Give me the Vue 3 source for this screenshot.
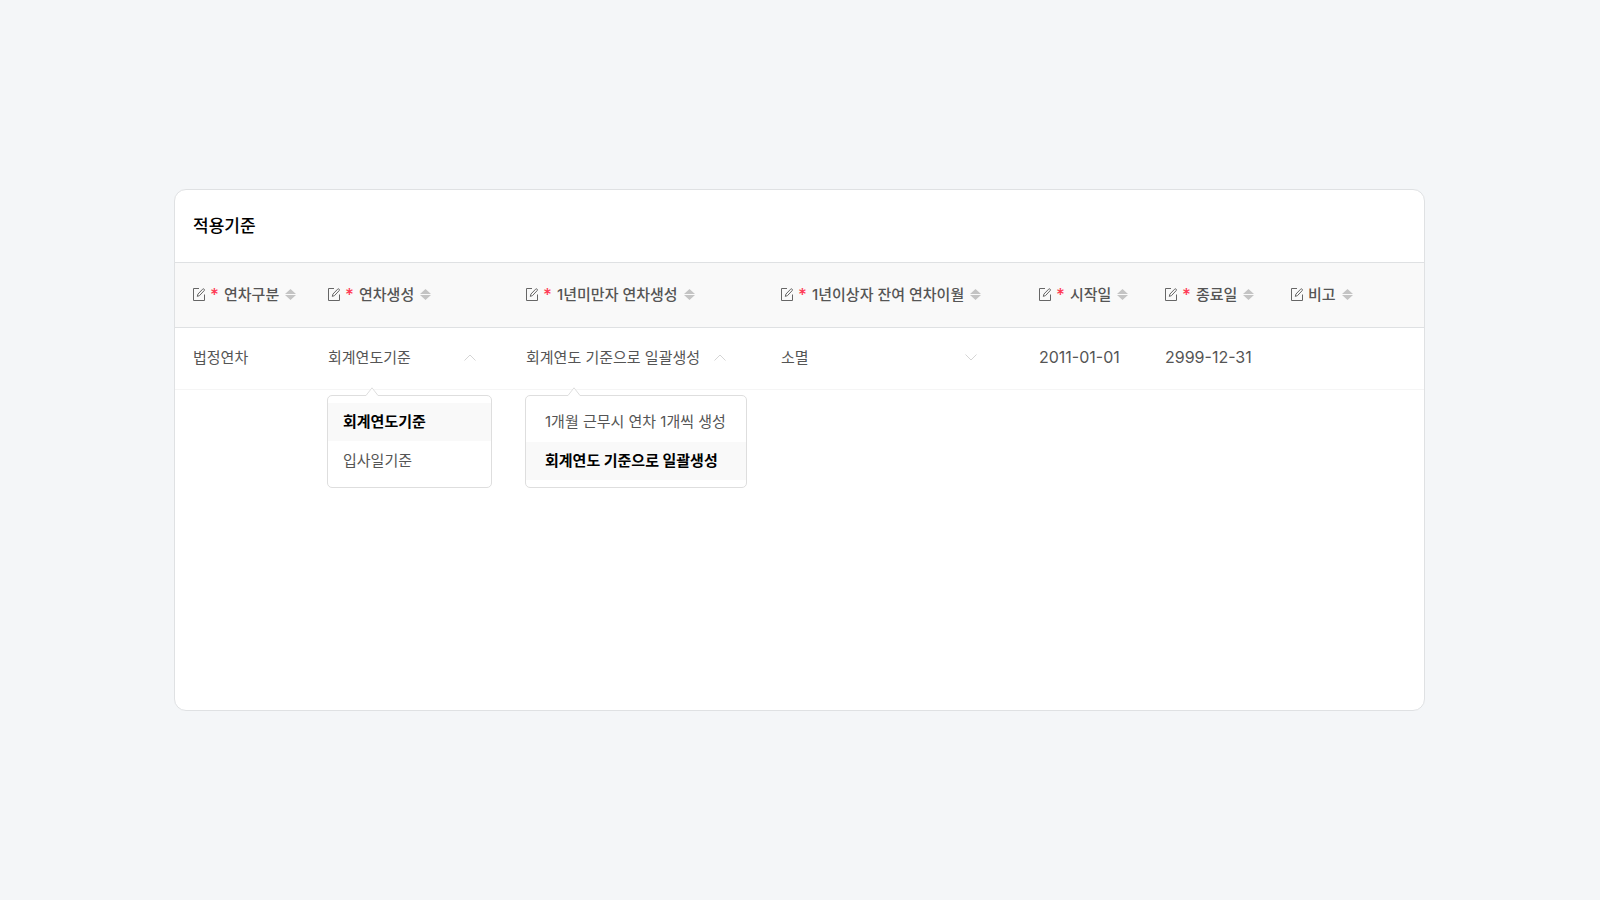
<template>
  <main class="page">
    <section class="card" aria-labelledby="card-title">
      <h2 id="card-title" class="card-title">적용기준</h2>

      <table class="grid">
        <colgroup>
          <col v-for="col in columns" :key="col.key" :style="{ width: col.width }">
        </colgroup>
        <thead>
          <tr>
            <th v-for="col in columns" :key="col.key" scope="col">
              <div class="head">
                <svg class="edit" width="12" height="13" viewBox="0 0 12 13" aria-hidden="true">
                  <path d="M6 0.5H0.5V12.5H11.5V6.5" />
                  <path d="M4.3 8.4L4.9 6.1L9.6 1.2Q10.3 0.4 11.1 1.1Q11.8 1.8 11.2 2.6L6.5 7.6Z" />
                </svg>
                <span v-if="col.required" class="required">*</span>
                <span class="label">{{ col.label }}</span>
                <button type="button" class="sort" :aria-label="col.label + ' 정렬'">
                  <svg width="11" height="11" viewBox="0 0 11 11" aria-hidden="true">
                    <path d="M5.5 0L11 5H0ZM5.5 11L0 6H11Z" />
                  </svg>
                </button>
              </div>
            </th>
          </tr>
        </thead>
        <tbody>
          <tr>
            <td v-for="col in columns" :key="col.key" :class="{ date: col.date }">
              <div v-if="col.options" class="field" :style="{ width: col.fieldWidth }">
                <select
                  v-model="row[col.key]"
                  :aria-label="col.label"
                  @mousedown.prevent="toggle(col.key)"
                >
                  <option v-for="opt in col.options" :key="opt" :value="opt">{{ opt }}</option>
                </select>
                <svg
                  class="chevron"
                  :class="{ up: open[col.key] }"
                  width="12"
                  height="7"
                  viewBox="0 0 12 7"
                  aria-hidden="true"
                >
                  <path d="M0.5 0.5L6 6L11.5 0.5" />
                </svg>
                <div v-if="open[col.key]" class="menu" :class="{ roomy: col.roomy }">
                  <svg class="tip" width="14" height="9" viewBox="0 0 14 9" aria-hidden="true">
                    <path d="M1 8.5L7 0.8L13 8.5V9H1Z" class="tip-fill" />
                    <path d="M0.5 8.5H1L7 0.8L13 8.5H13.5" class="tip-line" />
                  </svg>
                  <button
                    v-for="opt in col.options"
                    :key="opt"
                    type="button"
                    class="item"
                    :class="{ selected: row[col.key] === opt }"
                    @click="pick(col.key, opt)"
                  >{{ opt }}</button>
                </div>
              </div>
              <template v-else>{{ row[col.key] }}</template>
            </td>
          </tr>
        </tbody>
      </table>
    </section>
  </main>
</template>

<script setup>
import { reactive } from 'vue'

const columns = [
  { key: 'type', label: '연차구분', required: true, width: '135px' },
  {
    key: 'create',
    label: '연차생성',
    required: true,
    width: '198px',
    fieldWidth: '148px',
    options: ['회계연도기준', '입사일기준']
  },
  {
    key: 'under',
    label: '1년미만자 연차생성',
    required: true,
    width: '255px',
    fieldWidth: '200px',
    roomy: true,
    options: ['1개월 근무시 연차 1개씩 생성', '회계연도 기준으로 일괄생성']
  },
  {
    key: 'over',
    label: '1년이상자 잔여 연차이월',
    required: true,
    width: '258px',
    fieldWidth: '196px',
    options: ['소멸', '이월']
  },
  { key: 'start', label: '시작일', required: true, width: '126px', date: true },
  { key: 'end', label: '종료일', required: true, width: '126px', date: true },
  { key: 'note', label: '비고', required: false, width: 'auto' }
]

const row = reactive({
  type: '법정연차',
  create: '회계연도기준',
  under: '회계연도 기준으로 일괄생성',
  over: '소멸',
  start: '2011-01-01',
  end: '2999-12-31',
  note: ''
})

const open = reactive({ create: true, under: true, over: false })

function toggle(key) {
  open[key] = !open[key]
}

function pick(key, value) {
  row[key] = value
  open[key] = false
}
</script>

<style>
body {
  margin: 0;
  background: #f4f6f8;
}
</style>

<style scoped>
.page {
  display: flex;
  align-items: center;
  justify-content: center;
  min-height: 100vh;
  padding: 24px 25px 24px 24px;
  box-sizing: border-box;
  font-family: Inter, 'Noto Sans CJK KR', sans-serif;
  font-size: 15px;
  line-height: 24px;
  color: #555;
}
.card {
  width: 100%;
  max-width: 1251px;
  min-height: 522px;
  box-sizing: border-box;
  background: #fff;
  border: 1px solid #dfe1e3;
  border-radius: 12px;
}
.card-title {
  margin: 0;
  padding: 24px 18px;
  font-size: 17px;
  font-weight: 500;
  color: #000;
}
.grid {
  width: 100%;
  table-layout: fixed;
  border-collapse: separate;
  border-spacing: 0;
}
th,
td {
  padding: 0 0 1px 18px;
  text-align: left;
  white-space: nowrap;
}
th {
  height: 63px;
  background: #f9f9f9;
  border-top: 1px solid #dfe1e3;
  border-bottom: 1px solid #dfe1e3;
  font-weight: 500;
}
td {
  height: 60px;
  border-bottom: 1px solid #f5f5f5;
}
td.date {
  height: 58px;
  padding-bottom: 3px;
  font-size: 16px;
}
.head {
  display: flex;
  align-items: center;
}
.edit {
  margin-right: 5px;
  fill: none;
  stroke: #666;
  stroke-width: 1;
}
.required {
  width: 14px;
  font-size: 17px;
  color: #ff3b55;
}
.sort {
  display: flex;
  margin-left: 6px;
  padding: 0;
  border: 0;
  background: none;
  fill: #c4c4c4;
  cursor: pointer;
}
.field {
  position: relative;
}
select {
  display: block;
  width: 100%;
  height: 40px;
  padding: 0;
  border: 0;
  appearance: none;
  background: none;
  font: inherit;
  color: inherit;
  cursor: pointer;
}
.chevron {
  position: absolute;
  top: 16px;
  right: 0;
  fill: none;
  stroke: #d5d5d5;
  pointer-events: none;
}
.chevron.up {
  transform: rotate(180deg);
}
.menu {
  position: absolute;
  top: calc(100% + 17px);
  left: -1px;
  z-index: 10;
  display: flex;
  flex-direction: column;
  gap: 1px;
  width: 165px;
  box-sizing: border-box;
  padding: 7px 0;
  background: #fff;
  border: 1px solid #dedede;
  border-radius: 5px;
}
.menu.roomy {
  width: 222px;
}
.tip {
  position: absolute;
  top: -9px;
  left: 37px;
}
.roomy .tip {
  left: 41px;
}
.tip-fill {
  fill: #fff;
}
.tip-line {
  fill: none;
  stroke: #dedede;
}
.item {
  height: 38px;
  padding: 0 15px;
  border: 0;
  background: none;
  font: inherit;
  color: inherit;
  text-align: left;
  white-space: nowrap;
  cursor: pointer;
}
.roomy .item {
  padding: 0 19px;
}
.item.selected {
  background: #f9f9f9;
  font-weight: 700;
  color: #000;
}
</style>
